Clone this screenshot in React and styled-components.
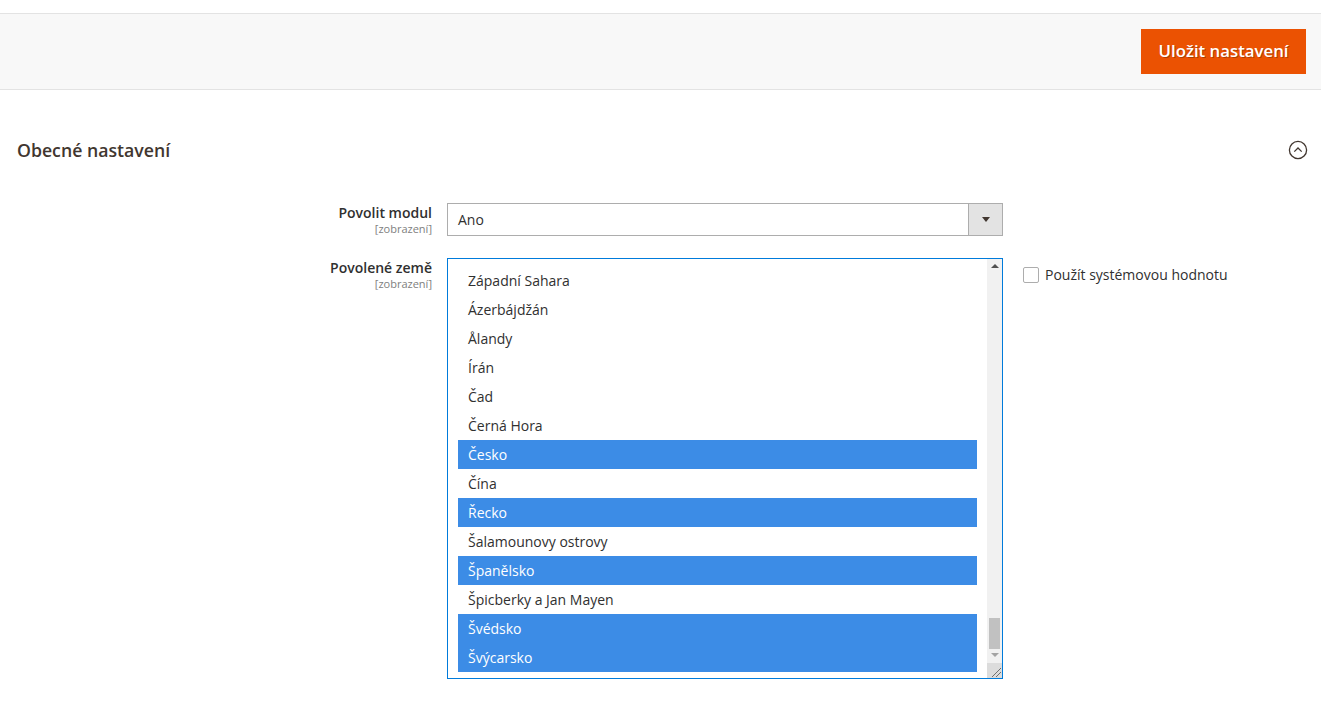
import styled, { createGlobalStyle } from "styled-components";

const GlobalStyle = createGlobalStyle`
  body {
    margin: 0;
    background: #fff;
    font-family: "Open Sans", "Liberation Sans", sans-serif;
    color: #303030;
  }
`;

const Page = styled.div`
  width: 1321px;
  padding-top: 13px;
`;

const ActionsBar = styled.div`
  display: flex;
  justify-content: flex-end;
  background: #f8f8f8;
  border-top: 1px solid #e3e3e3;
  border-bottom: 1px solid #e3e3e3;
  padding: 15px 15px 15px;
`;

const PrimaryButton = styled.button`
  height: 45px;
  width: 165px;
  padding: 0 0 2px;
  border: 1px solid #eb5202;
  background: #eb5202;
  color: #fff;
  font-family: inherit;
  font-size: 16.8px;
  font-weight: 600;
  text-shadow: 1px 1px 0 rgba(0, 0, 0, 0.25);
  cursor: pointer;
`;

const SectionHeader = styled.div`
  display: flex;
  align-items: center;
  justify-content: space-between;
  height: 44px;
  margin-top: 38px;
  padding: 0 13px 0 17px;
`;

const SectionTitle = styled.h2`
  margin: 0;
  font-size: 17.7px;
  font-weight: 600;
  color: #41362f;
`;

const Form = styled.div`
  display: flex;
  flex-direction: column;
  gap: 22px;
  margin-top: 31px;
  padding-left: 17px;
`;

const Row = styled.div`
  display: flex;
  align-items: flex-start;
`;

const Label = styled.div`
  width: 415px;
  margin-right: 15px;
  text-align: right;
  padding-top: 1px;
`;

const LabelText = styled.div`
  font-size: 14px;
  font-weight: 600;
  line-height: 18px;
  color: #303030;
`;

const Scope = styled.div`
  font-size: 11px;
  line-height: 14px;
  color: #808080;
`;

const Select = styled.div`
  display: flex;
  width: 554px;
  height: 31px;
  border: 1px solid #adadad;
  font-size: 14px;
`;

const SelectValue = styled.div`
  flex: 1;
  display: flex;
  align-items: center;
  padding-left: 10px;
`;

const SelectToggle = styled.div`
  width: 33px;
  display: flex;
  align-items: center;
  justify-content: center;
  background: #e3e3e3;
  border-left: 1px solid #adadad;
`;

const Caret = styled.span`
  width: 0;
  height: 0;
  border-left: 4px solid transparent;
  border-right: 4px solid transparent;
  border-top: 5px solid #41362f;
`;

const MultiSelect = styled.div`
  display: flex;
  width: 554px;
  height: 419px;
  border: 1px solid #007bdb;
  overflow: hidden;
`;

const Options = styled.div`
  flex: 1;
  padding: 7px 10px 0;
`;

const Option = styled.div`
  height: 29px;
  line-height: 29px;
  padding-left: 10px;
  font-size: 14px;
  color: ${(p) => (p.$selected ? "#fff" : "#303030")};
  background: ${(p) => (p.$selected ? "#3c8ce6" : "transparent")};
`;

const Scrollbar = styled.div`
  width: 15px;
  display: flex;
  flex-direction: column;
  align-items: center;
  background: #f1f1f1;
`;

const Arrow = styled.span`
  width: 0;
  height: 0;
  margin: ${(p) => (p.$up ? "5px 0 0" : "4px 0 0")};
  border-left: 4px solid transparent;
  border-right: 4px solid transparent;
  ${(p) =>
    p.$up ? "border-bottom: 4px solid #505050;" : "border-top: 4px solid #a3a3a3;"}
`;

const Track = styled.div`
  flex: 1;
  width: 100%;
  display: flex;
  flex-direction: column;
  justify-content: flex-end;
  align-items: center;
`;

const Thumb = styled.div`
  width: 11px;
  height: 31px;
  background: #c1c1c1;
`;

const Resizer = styled.div`
  width: 15px;
  height: 15px;
  margin-top: 6px;
  background: #dcdcdc;
  display: flex;
`;

const SystemValue = styled.label`
  display: flex;
  align-items: center;
  gap: 6px;
  margin-left: 20px;
  margin-top: 7px;
  font-size: 14px;
  color: #303030;
`;

const Checkbox = styled.span`
  width: 14px;
  height: 14px;
  border: 1px solid #adadad;
  border-radius: 2px;
  background: #fff;
`;

const countries = [
  ["Západní Sahara", false],
  ["Ázerbájdžán", false],
  ["Ålandy", false],
  ["Írán", false],
  ["Čad", false],
  ["Černá Hora", false],
  ["Česko", true],
  ["Čína", false],
  ["Řecko", true],
  ["Šalamounovy ostrovy", false],
  ["Španělsko", true],
  ["Špicberky a Jan Mayen", false],
  ["Švédsko", true],
  ["Švýcarsko", true],
];

export default function App() {
  return (
    <Page>
      <GlobalStyle />
      <ActionsBar>
        <PrimaryButton>Uložit nastavení</PrimaryButton>
      </ActionsBar>

      <SectionHeader>
        <SectionTitle>Obecné nastavení</SectionTitle>
        <svg width="20" height="20" viewBox="0 0 20 20">
          <circle cx="10" cy="10" r="8.6" fill="none" stroke="#41362f" strokeWidth="1.3" />
          <path d="M6.3 11.6 L10 8 L13.7 11.6" fill="none" stroke="#41362f" strokeWidth="1.3" />
        </svg>
      </SectionHeader>

      <Form>
        <Row>
          <Label>
            <LabelText>Povolit modul</LabelText>
            <Scope>[zobrazení]</Scope>
          </Label>
          <Select>
            <SelectValue>Ano</SelectValue>
            <SelectToggle>
              <Caret />
            </SelectToggle>
          </Select>
        </Row>

        <Row>
          <Label>
            <LabelText>Povolené země</LabelText>
            <Scope>[zobrazení]</Scope>
          </Label>
          <MultiSelect>
            <Options>
              {countries.map(([name, sel]) => (
                <Option key={name} $selected={sel}>
                  {name}
                </Option>
              ))}
            </Options>
            <Scrollbar>
              <Arrow $up />
              <Track>
                <Thumb />
              </Track>
              <Arrow />
              <Resizer>
                <svg width="15" height="15" viewBox="0 0 15 15">
                  <path d="M5 14 L14 5 M9 14 L14 9" stroke="#707070" strokeWidth="1" />
                </svg>
              </Resizer>
            </Scrollbar>
          </MultiSelect>
          <SystemValue>
            <Checkbox />
            Použít systémovou hodnotu
          </SystemValue>
        </Row>
      </Form>
    </Page>
  );
}
